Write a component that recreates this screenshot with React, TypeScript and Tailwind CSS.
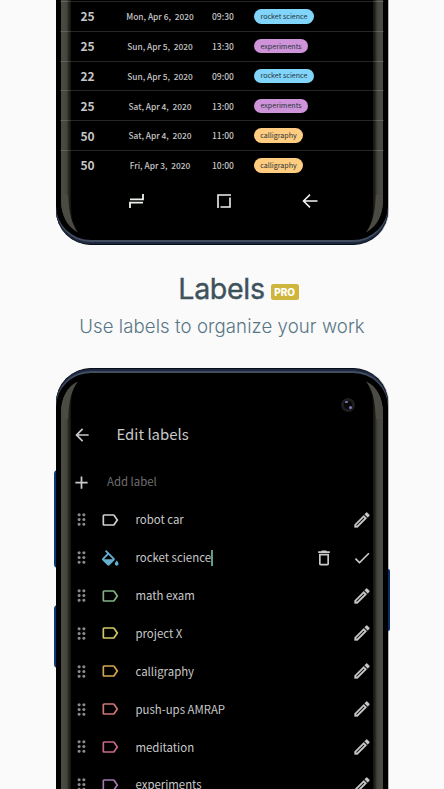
import React from "react";
import { MdArrowBack, MdAdd, MdDragIndicator, MdOutlineLabel, MdDeleteOutline, MdCheck } from "react-icons/md";

const sans = "font-['Noto_Sans_CJK_SC','Noto_Sans',sans-serif]";

const sessions = [
  { min: 25, date: "Mon, Apr 6,\u00a0 2020", time: "09:30", label: "rocket science", chip: "w-[60px] bg-[#81d4fa]" },
  { min: 25, date: "Sun, Apr 5,\u00a0 2020", time: "13:30", label: "experiments", chip: "w-[54px] bg-[#ce93d8]" },
  { min: 22, date: "Sun, Apr 5,\u00a0 2020", time: "09:00", label: "rocket science", chip: "w-[60px] bg-[#81d4fa]" },
  { min: 25, date: "Sat, Apr 4,\u00a0 2020", time: "13:00", label: "experiments", chip: "w-[54px] bg-[#ce93d8]" },
  { min: 50, date: "Sat, Apr 4,\u00a0 2020", time: "11:00", label: "calligraphy", chip: "w-[49px] bg-[#ffcc80]" },
  { min: 50, date: "Fri, Apr 3,\u00a0 2020", time: "10:00", label: "calligraphy", chip: "w-[49px] bg-[#ffcc80]" },
];

const labels = [
  { name: "robot car", color: "text-[#d0d0d0]" },
  { name: "rocket science", color: "text-[#66afcf]", editing: true },
  { name: "math exam", color: "text-[#82b184]" },
  { name: "project X", color: "text-[#d1c766]" },
  { name: "calligraphy", color: "text-[#d5a850]" },
  { name: "push-ups AMRAP", color: "text-[#cd7777]" },
  { name: "meditation", color: "text-[#c96887]" },
  { name: "experiments", color: "text-[#a777b5]" },
];

/* Reflection along the curved left edge of the glass; mirrored for the right. */
function Glare({ id, top, className }: { id: string; top: boolean; className: string }) {
  const body = top
    ? "M1 421V44C1 30 7 17 18 12.5C13 20 11 28 11 42V421Z"
    : "M1 0V200C1 214 7 227 18 232.5C13 224 11 214 11 199V0Z";
  const tip = top
    ? "M1 50V44C1 30 7 17 18 12.5C12 20 9 30 8 50Z"
    : "M1 195V200C1 214 7 227 18 232.5C12 224 9 214 8 195Z";
  return (
    <svg className={`absolute top-0 pointer-events-none ${className}`} width="18" height={top ? 421 : 245} aria-hidden>
      <defs>
        <linearGradient id={id} gradientUnits="userSpaceOnUse" x1="0" x2="12" y1="0" y2="0">
          <stop offset="0" stopColor="#45453d" />
          <stop offset=".2" stopColor="#4b4b43" />
          <stop offset=".55" stopColor="#45453e" />
          <stop offset=".75" stopColor="#24241f" />
          <stop offset="1" stopColor="#080807" />
        </linearGradient>
      </defs>
      <path d={body} fill={`url(#${id})`} />
      <path d={tip} fill="#4b4b43" />
    </svg>
  );
}

function NavBar() {
  return (
    <div className="mt-[8px] flex h-[26px] items-center pl-[73px]">
      <svg width="15" height="14" fill="none" stroke="#eef2ec" strokeWidth="1.8">
        <path d="M1 5.3H14V0M1 14V8.7H14" />
      </svg>
      <svg className="ml-[73px]" width="14" height="14" fill="none" stroke="#eef2ec" strokeWidth="1.6">
        <path d="M14 1H1V14M3.5 13H13V3.5" />
      </svg>
      <svg className="ml-[71px]" width="16" height="14" fill="none" stroke="#f4f4f4" strokeWidth="1.5">
        <path d="M15.5 7H1.5M8 .6L1.5 7L8 13.4" />
      </svg>
    </div>
  );
}

function HistoryPhone() {
  return (
    <div className="relative h-[245px] w-[332px] rounded-b-[35px] border-b border-[#070c18] bg-black shadow-[inset_0_-2px_0_#1c2940,inset_0_-4px_0_#414c5e,1px_0_0_#b5b5b8]">
      <Glare id="glareA" top={false} className="left-1" />
      <Glare id="glareB" top={false} className="right-1 -scale-x-100" />
      <div className="relative pt-px">
        {sessions.map((s, i) => (
          <div key={i} className={`mx-1 flex h-[29.8px] items-center border-t border-white/15 text-[#c6c6c6] ${sans}`}>
            <div className="w-[55px] text-center text-[12px] font-bold leading-none">{s.min}</div>
            <div className="ml-[7px] w-[76px] text-center text-[8.35px] font-medium leading-none whitespace-nowrap">{s.date}</div>
            <div className="ml-[14px] w-[42px] text-[8.5px] font-medium leading-none">{s.time}</div>
            <div className={`flex h-[14.5px] items-center justify-center rounded-full text-[7.1px] leading-none whitespace-nowrap text-[#26343a] ${s.chip}`}>{s.label}</div>
          </div>
        ))}
      </div>
      <NavBar />
    </div>
  );
}

function BucketIcon() {
  return (
    <svg width="17" height="16" viewBox="3 0 18.5 17.3" fill="currentColor">
      <path d="M16.56 8.94L7.62 0 6.21 1.41l2.38 2.38-5.15 5.15c-.59.59-.59 1.54 0 2.12l5.5 5.5c.29.29.68.44 1.06.44s.77-.15 1.06-.44l5.5-5.5c.59-.58.59-1.53 0-2.12zM5.21 10L10 5.21 14.79 10H5.21zM19 11.5s-2 2.17-2 3.5c0 1.1.9 2 2 2s2-.9 2-2c0-1.33-2-3.5-2-3.5z" />
    </svg>
  );
}

function PencilIcon() {
  return (
    <svg width="20" height="20" viewBox="0 0 24 24" fill="currentColor" stroke="currentColor" strokeWidth=".35">
      <path d="M14.06 9.02l.92.92L5.92 19H5v-.92l9.06-9.06M17.66 3c-.25 0-.51.1-.7.29l-1.83 1.83 3.75 3.75 1.83-1.83c.39-.39.39-1.02 0-1.41l-2.34-2.34c-.2-.2-.45-.29-.71-.29zm-3.6 3.19L3 17.25V21h3.75L17.81 9.94l-3.75-3.75z" />
    </svg>
  );
}

function LabelsPhone() {
  return (
    <div className="relative h-[421px] w-[332px] shrink-0">
      <div className="absolute -left-[2px] top-[102px] h-[98px] w-[5px] rounded-l bg-[#073b7a]" />
      <div className="absolute -left-[2px] top-[237px] h-[63px] w-[5px] rounded-l bg-[#073b7a]" />
      <div className="absolute -right-[2px] top-[201px] z-10 h-[62px] w-[2px] rounded-r bg-[#0b2c62]" />
      <div className={`relative h-[421px] overflow-hidden rounded-t-[35px] border-t border-[#070c18] bg-black text-[#c9c9c9] shadow-[inset_0_2px_0_#1c2940,inset_0_4px_0_#414c5e,1px_0_0_#b5b5b8] ${sans}`}>
        <div className="absolute right-[33px] top-[29px] size-[14px] rounded-full bg-[#1d1d1f]">
          <div className="absolute left-[3px] top-[3px] size-[8px] rounded-full bg-[#09090c]" />
          <div className="absolute left-[4px] top-[3px] h-[2px] w-[3px] rounded-full bg-[#8276aa]" />
          <div className="absolute left-[8px] top-[8px] size-[3px] rounded-full bg-[#8b70b7]" />
        </div>
        <div className="mt-[51px] flex h-[30px] items-center pl-[16px]">
          <MdArrowBack size={20} />
          <div className="-mt-[1px] ml-[24.5px] text-[14.9px] leading-none">Edit labels</div>
        </div>
        <div className="mt-[17px] flex h-[30px] items-center pl-[15px]">
          <MdAdd size={21} />
          <div className="ml-[15px] text-[11.4px] leading-none text-[#6f6f6f]">Add label</div>
        </div>
        <div className="mt-[4px]">
          {labels.map((l) => (
            <div key={l.name} className="flex h-[37.85px] items-center pl-[16px] pr-[16px]">
              <MdDragIndicator size={19} className="text-[#8b8b8b]" />
              <div className={`ml-[9px] flex w-[20px] justify-center ${l.color}`}>{l.editing ? <BucketIcon /> : <MdOutlineLabel size={20} />}</div>
              <div className="ml-[15.5px] mt-[0.5px] text-[11.4px] leading-none whitespace-nowrap">{l.name}</div>
              {l.editing && <div className="h-[16px] w-[2px] bg-[#5b9c96]" />}
              <div className="ml-auto flex gap-[18px]">
                {l.editing && <MdDeleteOutline size={20} />}
                {l.editing ? <MdCheck size={20} /> : <PencilIcon />}
              </div>
            </div>
          ))}
        </div>
        <Glare id="glareC" top className="left-1" />
        <Glare id="glareD" top className="right-1 -scale-x-100" />
      </div>
    </div>
  );
}

export default function App() {
  return (
    <div className="flex h-[789px] w-[444px] flex-col items-center overflow-hidden bg-[#fafafa]">
      <HistoryPhone />
      <div className="flex h-[123px] w-full flex-col items-center pt-[26.5px] font-['Inter',sans-serif]">
        <div className="flex h-[36px] items-center pl-[33px]">
          <h1 className="text-[28.6px] font-normal leading-none tracking-[-0.35px] text-[#3e525c] [-webkit-text-stroke:0.4px_#3e525c]">Labels</h1>
          <span className="ml-[6px] mt-[4px] flex h-[16px] w-[28px] items-center justify-center rounded-[2.5px] bg-[#cfb53b] text-[10px] font-extrabold leading-none text-white">PRO</span>
        </div>
        <p className="mt-[9px] text-[18.6px] font-light leading-none tracking-[0.08px] whitespace-nowrap text-[#587784]">Use labels to organize your work</p>
      </div>
      <LabelsPhone />
    </div>
  );
}
